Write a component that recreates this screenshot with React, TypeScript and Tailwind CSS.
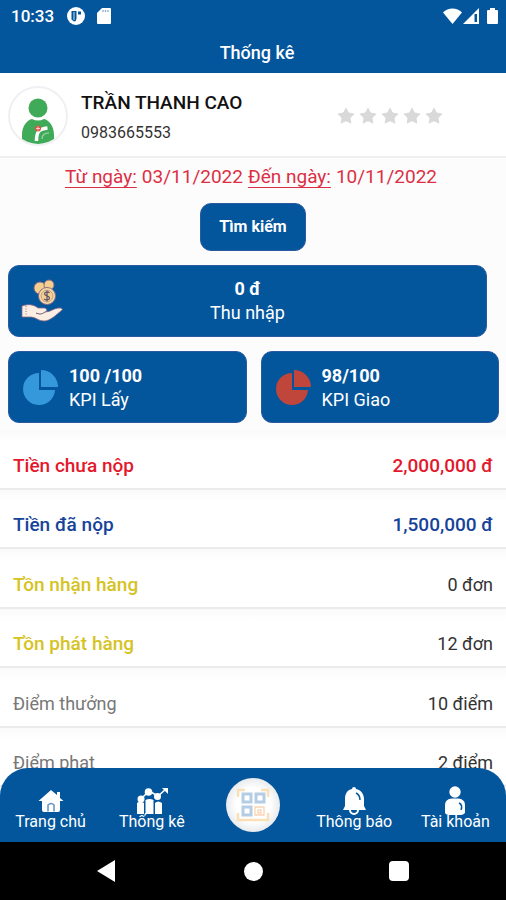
import * as React from "react";
import { Star } from "lucide-react";

const rows = [
  { label: "Tiền chưa nộp", value: "2,000,000 đ", labelClass: "text-[19px] font-medium text-[#e3182c]", valueClass: "text-[19px] font-medium text-[#e3182c]" },
  { label: "Tiền đã nộp", value: "1,500,000 đ", labelClass: "text-[19px] font-medium text-[#16439a]", valueClass: "text-[19px] font-medium text-[#16439a]" },
  { label: "Tồn nhận hàng", value: "0 đơn", labelClass: "text-[19px] font-medium text-[#d6c323]", valueClass: "text-[#333]" },
  { label: "Tồn phát hàng", value: "12 đơn", labelClass: "text-[19px] font-medium text-[#d6c323]", valueClass: "text-[#333]" },
  { label: "Điểm thưởng", value: "10 điểm", labelClass: "text-[#777]", valueClass: "text-[#333]" },
  { label: "Điểm phạt", value: "2 điểm", labelClass: "text-[#777]", valueClass: "text-[#333]" },
];

function StatusBar() {
  return (
    <div className="flex h-8 items-center justify-between pl-[11px] pr-2 text-white">
      <div className="flex items-center">
        <span className="text-[17px] font-medium leading-5">10:33</span>
        <svg className="ml-[13px] h-[18px] w-[18px]" viewBox="0 0 18 18">
          <circle cx="9" cy="9" r="9" fill="#fff" />
          <path d="M4.500 4h5v7.500a3 3 0 0 1-2.500 3l-2.500-2z" fill="#03569c" />
          <path d="M11 4.500h3v3h-3z" fill="#03569c" />
          <path d="M7 5v8" stroke="#fff" strokeWidth="0.800" fill="none" />
        </svg>
        <svg className="ml-3 h-4 w-[14px]" viewBox="0 0 14 16" fill="#fff">
          <path d="M5 0h8a1 1 0 0 1 1 1v14a1 1 0 0 1-1 1H1a1 1 0 0 1-1-1V5z" />
          <path d="M6 2v2M8.500 2v2M11 2v2" stroke="#7fa9cd" strokeWidth="1.200" />
        </svg>
      </div>
      <div className="flex items-center">
        <svg className="h-4 w-[19px]" viewBox="0 0 19 16" fill="#fff">
          <path d="M9.500 16 0 4.500C5 -1 14 -1 19 4.500z" />
        </svg>
        <svg className="ml-px h-4 w-4" viewBox="0 0 16 16">
          <path d="M16 0v16H0z" fill="#fff" />
          <path d="M11.500 6h2.500v8h-2.500z" fill="#03569c" />
        </svg>
        <svg className="ml-2 h-4 w-[11px]" viewBox="0 0 11 16" fill="#fff">
          <path d="M3 0h5v2h2a1 1 0 0 1 1 1v12a1 1 0 0 1-1 1H1a1 1 0 0 1-1-1V3a1 1 0 0 1 1-1h2z" />
        </svg>
      </div>
    </div>
  );
}

function Avatar() {
  return (
    <div className="h-[60px] w-[60px] shrink-0 overflow-hidden rounded-full border-2 border-[#f0f0f4] bg-white">
      <svg viewBox="0 0 56 56" className="h-full w-full">
        <circle cx="28" cy="20" r="9.500" fill="#3faa57" />
        <path d="M12 56V47c0-9 5-15 10-16q6 3 12 0c5 1 10 7 10 16v7c-4 4-9 5-16 5s-12-1-16-3z" fill="#3faa57" />
        <path d="M26.500 53c0-9 2-12 11-13" fill="none" stroke="#fff" strokeWidth="3.500" />
        <path d="M32 51c0-4 2-6 7-6" fill="none" stroke="#8fcb9b" strokeWidth="1.500" />
        <circle cx="28" cy="40.500" r="3" fill="#e0504b" />
        <path d="M28 38.500v4M26 40.500h4" stroke="#f6c9c4" strokeWidth="1" />
      </svg>
    </div>
  );
}

function MoneyIcon() {
  return (
    <svg className="h-11 w-11 shrink-0" viewBox="0 0 44 44">
      <g fill="#f5cf8e" stroke="#8b6a86" strokeWidth="1">
        <circle cx="19" cy="9" r="6" />
        <circle cx="28" cy="6" r="5" />
        <circle cx="26" cy="17" r="8.500" fill="#f8dca6" />
        <circle cx="26" cy="17" r="6" fill="#f5cf8e" strokeWidth="0.500" />
      </g>
      <path d="M28.500 14c-1-1.500-5-1.500-5 .8s5 1.800 5 4.200-4 2.500-5.300.8M26 11.500v11" fill="none" stroke="#5a4f6b" strokeWidth="1.200" />
      <path d="M1 27c6-2 11-2 16 2h6c3 0 4 3 1 4 6 0 9-4 14-4 3 0 4 1 3 2-6 5-12 11-18 11-6 0-8-4-13-4H1z" fill="#fdeee4" stroke="#8b6a86" strokeWidth="0.800" />
      <path d="M15 34c3 1 5 2 9-1" fill="none" stroke="#6c5570" strokeWidth="1" />
      <path d="M5 27v10" stroke="#6c5570" strokeWidth="0.800" strokeDasharray="1 1.500" />
    </svg>
  );
}

function KpiCard({ value, label, iconClass }: { value: string; label: string; iconClass: string }) {
  return (
    <div className="flex h-[72px] items-center rounded-[11px] border border-[#2b5aa0] bg-[#03569c] pl-[14px] pt-px text-white">
      <svg className={`h-9 w-9 shrink-0 ${iconClass}`} viewBox="0 0 36 36" fill="currentColor">
        <path d="M16 3v17h16A16 16 0 1 1 16 3z" />
        <path d="M18 0a17 17 0 0 1 17 17H18z" />
      </svg>
      <div className="ml-[10px] text-lg leading-6">
        <div className="font-bold">{value}</div>
        <div>{label}</div>
      </div>
    </div>
  );
}

function NavItem({ label, children }: { label: string; children: React.ReactNode }) {
  return (
    <button className="flex h-full flex-col items-center justify-start pt-[18px] text-white">
      <svg className="h-[30px] w-8 shrink-0" viewBox="0 0 32 30" fill="#fff">
        {children}
      </svg>
      <span className="-mt-[6px] whitespace-nowrap text-base leading-6">{label}</span>
    </button>
  );
}

function BottomNav() {
  return (
    <nav className="absolute inset-x-0 bottom-0 grid h-[74px] grid-cols-5 rounded-t-[28px] bg-[#03569c]">
      <NavItem label="Trang chủ">
        <path d="M16 4 3.500 15H7v9q0 2 2 2h14q2 0 2-2v-9h3.500L25 12V6h-3v3z" />
        <path d="M13 25.500V19q3-3 6 0v6.500" fill="none" stroke="#5f92be" strokeWidth="1.500" />
      </NavItem>
      <NavItem label="Thống kê">
        <path d="M1 17q3-3 7 0v11H1zM9.500 14q4-2 8 0v14h-8zM19 17q3-3 7 0v11h-7z" />
        <path d="m5 13 8-8 9 5 8-7" fill="none" stroke="#fff" strokeWidth="1.500" />
        <circle cx="5" cy="13" r="3.500" />
        <circle cx="12.500" cy="6" r="3.800" />
        <circle cx="21.500" cy="10.500" r="3.500" />
        <path d="M26 2h6v6z" />
      </NavItem>
      <button aria-label="QR" className="flex items-start justify-center pt-[10px]">
        <span className="flex h-[54px] w-[54px] items-center justify-center rounded-full bg-radial from-white from-45% to-[#cfd3da]">
          <svg className="h-9 w-9" viewBox="0 0 36 36" fill="none">
            <path d="M3 10V3h7M26 3h7v7M3 26v7h30v-7" stroke="#fae0b8" strokeWidth="2.500" />
            <g stroke="#b4cce4" strokeWidth="3">
              <path d="M8 7h8v8H8zM21 7h8v8h-8zM8 20h8v8H8z" />
            </g>
            <path d="M20 20h9v8h-9zM23 23h3v3h-3z" stroke="#f9d5b4" strokeWidth="1.300" />
          </svg>
        </span>
      </button>
      <NavItem label="Thông báo">
        <path d="M14 3a2 2 0 0 1 4 0c5 1 8 5 8 10v7l2 4H5l2-4v-7c0-5 2-9 7-10z" />
        <path d="M12 24a4 4 0 0 0 8 0" fill="none" stroke="#fff" strokeWidth="2" />
        <path d="M18 7q4 2 4 7" fill="none" stroke="#03569c" strokeWidth="1.500" />
      </NavItem>
      <NavItem label="Tài khoản">
        <circle cx="16" cy="6" r="5.700" />
        <path d="M6 27V19q0-6 7-6.500h6q7 .5 7 6.500v8q-2 2-4 2H10q-3 0-4-2z" />
        <path d="M20 17q4 2 2 7" fill="none" stroke="#03569c" strokeWidth="1.500" />
      </NavItem>
    </nav>
  );
}

export default function App() {
  return (
    <div className="flex h-screen flex-col overflow-hidden bg-white font-['Roboto','Noto_Sans',sans-serif]">
      <header className="shrink-0 bg-[#03569c]">
        <StatusBar />
        <h1 className="h-[41px] pl-2 text-center text-lg font-medium leading-[41px] text-white">Thống kê</h1>
      </header>

      <main className="relative flex-1 overflow-hidden bg-[#fcfcfc]">
        <section className="flex h-[85px] items-center border-b-2 border-[#efefef] bg-white pl-2 pt-[2px]">
          <Avatar />
          <div className="ml-[13px] flex-1 pt-1">
            <div className="text-[19px] font-medium leading-6 text-[#111]">TRẦN THANH CAO</div>
            <div className="mt-[6px] text-base leading-6 text-[#333]">0983665553</div>
          </div>
          <div className="mr-[62px] flex gap-[2px]" aria-label="0 / 5">
            {[1, 2, 3, 4, 5].map((n) => (
              <Star key={n} className="h-5 w-5 fill-[#d9d9d9] text-[#d9d9d9]" strokeWidth={0} />
            ))}
          </div>
        </section>

        <div className="mt-[7px] flex justify-center gap-[5px] pr-1 text-[19px] leading-6 text-[#dc2f45]">
          <button className="underline decoration-1 underline-offset-4">Từ ngày:</button>
          <span>03/11/2022</span>
          <button className="underline decoration-1 underline-offset-4">Đến ngày:</button>
          <span>10/11/2022</span>
        </div>

        <div className="mt-[14px] flex justify-center">
          <button className="h-12 rounded-[11px] border border-[#2b5aa0] bg-[#03569c] px-[18px] text-base font-bold text-white">
            Tìm kiếm
          </button>
        </div>

        <div className="ml-2 mr-[19px] mt-[14px] flex h-[72px] items-center rounded-[11px] border border-[#2b5aa0] bg-[#03569c] pl-3 text-white">
          <MoneyIcon />
          <div className="flex-1 pr-[56px] text-center text-lg leading-6">
            <div className="font-bold">0 đ</div>
            <div>Thu nhập</div>
          </div>
        </div>

        <div className="mt-[14px] grid grid-cols-2 gap-[14px] pl-2 pr-[7px]">
          <KpiCard value="100 /100" label="KPI Lấy" iconClass="text-[#3598db]" />
          <KpiCard value="98/100" label="KPI Giao" iconClass="text-[#c0453a]" />
        </div>

        <dl className="mt-[7px] grid h-[357px] auto-rows-fr">
          {rows.map((row) => (
            <div
              key={row.label}
              className="flex items-center justify-between border-b-2 border-[#ebebeb] bg-linear-to-b from-[#fafafa] to-white to-20% px-[13px] pt-[14px] text-lg leading-6"
            >
              <dt className={row.labelClass}>{row.label}</dt>
              <dd className={row.valueClass}>{row.value}</dd>
            </div>
          ))}
        </dl>

        <BottomNav />
      </main>

      <footer className="grid h-[58px] shrink-0 grid-cols-[1fr_40px_1fr] items-center bg-black px-[97px]">
        <button aria-label="Back">
          <svg className="h-[22px] w-[18px]" viewBox="0 0 18 22" fill="#fff">
            <path d="M18 0v22L0 11z" />
          </svg>
        </button>
        <button aria-label="Home" className="h-[19px] w-[19px] justify-self-center rounded-full bg-white" />
        <button aria-label="Recent apps" className="h-5 w-5 justify-self-end rounded-sm bg-white" />
      </footer>
    </div>
  );
}
